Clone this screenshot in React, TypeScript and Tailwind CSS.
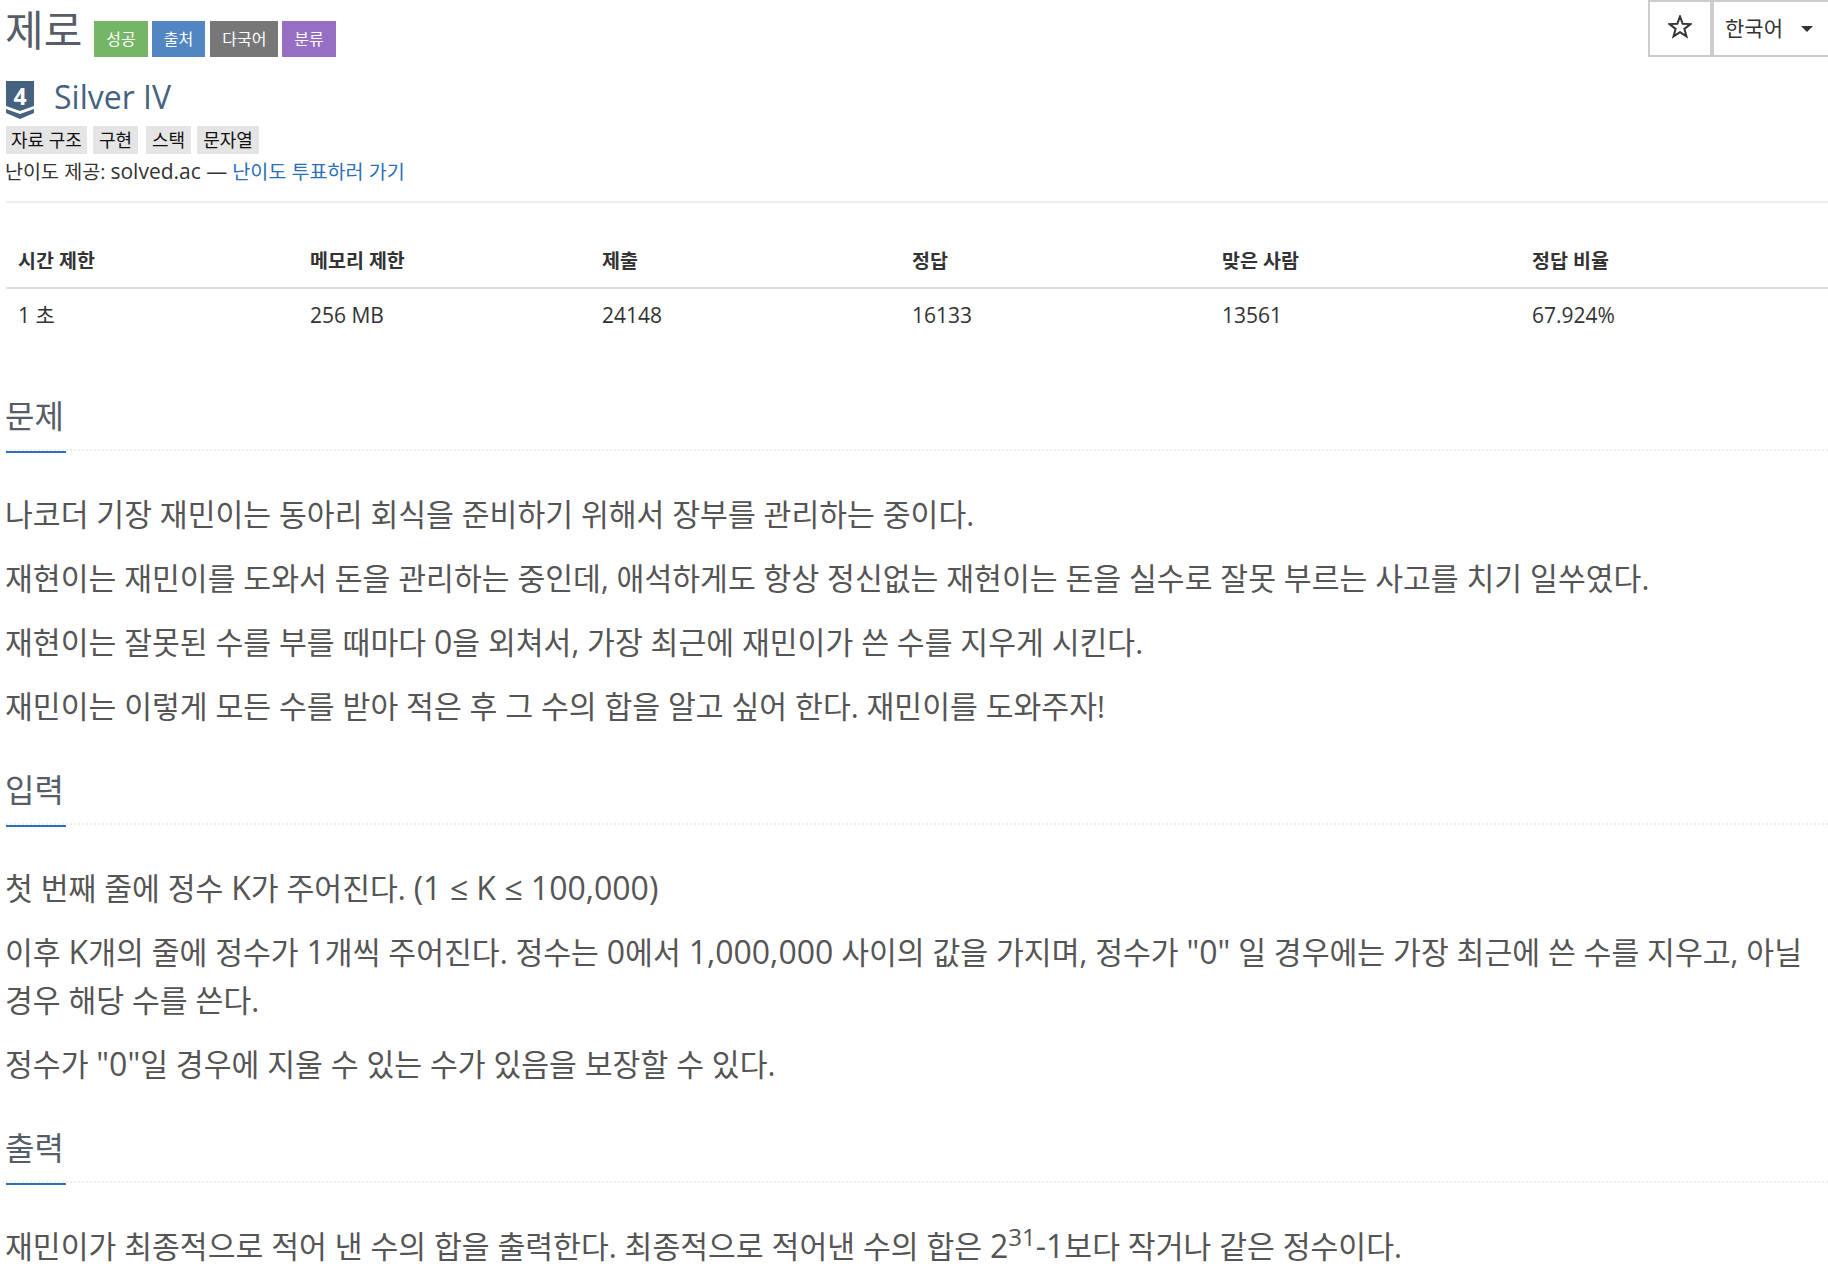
import React from 'react';

const fontStack = '"Open Sans", "Noto Sans CJK KR", sans-serif';

const stats = [
  { label: '시간 제한', value: '1 초', width: 'w-[292px]' },
  { label: '메모리 제한', value: '256 MB', width: 'w-[292px]' },
  { label: '제출', value: '24148', width: 'w-[310px]' },
  { label: '정답', value: '16133', width: 'w-[310px]' },
  { label: '맞은 사람', value: '13561', width: 'w-[310px]' },
  { label: '정답 비율', value: '67.924%', width: 'flex-1' },
];

function Badge({ text, className }: { text: string; className: string }) {
  return (
    <span className={`inline-flex h-9 items-center px-3 text-[16px] text-white ${className}`}>{text}</span>
  );
}

function Tag({ text, className = '' }: { text: string; className?: string }) {
  return <span className={`inline-flex h-7 items-center bg-[#e5e5e5] text-[18px] text-[#111] ${className}`}>{text}</span>;
}

// latin runs sit a little larger than the hangul around them
function L({ children }: { children: React.ReactNode }) {
  return <span className="text-[32px] leading-none">{children}</span>;
}

function Section({ title, children }: { title: string; children: React.ReactNode }) {
  return (
    <section>
      <div className="relative h-[59px] border-b-2 border-dotted border-[#eee]">
        <h2 className="-ml-px text-[32px] leading-[48px] text-[#555d68]">{title}</h2>
        <div className="absolute bottom-[-4px] left-0 h-0.5 w-[60px] bg-[#2b70b8]" />
      </div>
      <div className="mt-[40px] -ml-px flex flex-col gap-[16px] pb-[35px] text-[30.25px] leading-[48px] text-[#555]">{children}</div>
    </section>
  );
}

export default function App() {
  return (
    <div className="h-[1278px] overflow-hidden bg-white pl-[6px]" style={{ fontFamily: fontStack }}>
      <header className="flex items-start justify-between">
        <div className="flex items-center gap-[4px] pt-[21px]">
          <h1 className="mr-[8px] -ml-px -translate-y-[9px] text-[42px] leading-[36px] text-[#555d68]">제로</h1>
          <Badge text="성공" className="bg-[#74b566]" />
          <Badge text="출처" className="-mr-px bg-[#5286c2]" />
          <Badge text="다국어" className="ml-[2px] bg-[#777]" />
          <Badge text="분류" className="bg-[#966fc5]" />
        </div>
        <div className="flex h-[57px] text-[21px] text-[#333]">
          <div className="flex w-[64px] items-center justify-center border-2 border-[#ccc] pb-[3px]">
            <svg width="24" height="24" viewBox="-1 -1 24 24" fill="none" stroke="#333" strokeWidth="2">
              <path d="M11 .5L13.7 7.8L21.5 8.1L15.4 12.9L17.5 20.4L11 16.1L4.5 20.4L6.6 12.9L.5 8.1L8.3 7.8Z" />
            </svg>
          </div>
          <div className="flex w-[116px] items-center gap-[18px] border-y-2 border-l-2 border-[#ccc] pl-[11px]">
            한국어
            <span className="border-x-[6px] border-t-[6px] border-x-transparent border-t-[#333]" />
          </div>
        </div>
      </header>

      <div className="mt-[20px] flex items-start gap-[20px]">
        <svg className="mt-[4px]" width="28" height="38" viewBox="0 0 28 38">
          <path d="M0 0H28V25L14 30L0 25Z" fill="#456280" />
          <path d="M0 28L14 33L28 28V32L14 38L0 32Z" fill="#456280" />
          <text x="14" y="24" textAnchor="middle" fontSize="23" fontWeight="700" fill="#fff">4</text>
        </svg>
        <span className="text-[32px] leading-[40px] text-[#456280]">Silver IV</span>
      </div>

      <div className="mt-[7px] flex gap-[6px]">
        <Tag text="자료 구조" className="px-[5px]" />
        <Tag text="구현" className="px-[6px]" />
        <Tag text="스택" className="ml-[2px] px-[6px]" />
        <Tag text="문자열" className="px-[6px]" />
      </div>
      <p className="mt-[4px] -ml-px text-[19.6px] leading-[28px] text-[#333]">
        난이도 제공: <span className="text-[21px] leading-none">solved.ac —</span>{' '}
        <span className="text-[#2b70b8]">난이도 투표하러 가기</span>
      </p>
      <hr className="mt-[15px] border-t-2 border-[#eee]" />

      <div className="mt-[33px] flex h-[53px] items-center border-b-2 border-[#ddd] pb-[2px] text-[19.5px] font-bold text-[#333]">
        {stats.map((s) => (
          <div key={s.label} className={`${s.width} pl-[12px]`}>{s.label}</div>
        ))}
      </div>
      <div className="flex h-[52px] items-center pt-[2px] text-[21px] text-[#333]">
        {stats.map((s) => (
          <div key={s.label} className={`${s.width} pl-[12px]`}>{s.value}</div>
        ))}
      </div>

      <div className="mt-[51px] flex flex-col">
        <Section title="문제">
          <p>나코더 기장 재민이는 동아리 회식을 준비하기 위해서 장부를 관리하는 중이다.</p>
          <p>재현이는 재민이를 도와서 돈을 관리하는 중인데, 애석하게도 항상 정신없는 재현이는 돈을 실수로 잘못 부르는 사고를 치기 일쑤였다.</p>
          <p>재현이는 잘못된 수를 부를 때마다 <L>0</L>을 외쳐서, 가장 최근에 재민이가 쓴 수를 지우게 시킨다.</p>
          <p>재민이는 이렇게 모든 수를 받아 적은 후 그 수의 합을 알고 싶어 한다. 재민이를 도와주자!</p>
        </Section>
        <Section title="입력">
          <p>첫 번째 줄에 정수 <L>K</L>가 주어진다. <L>(1 ≤ K ≤ 100,000)</L></p>
          <p>이후 <L>K</L>개의 줄에 정수가 <L>1</L>개씩 주어진다. 정수는 <L>0</L>에서 <L>1,000,000</L> 사이의 값을 가지며, 정수가 <L>"0"</L> 일 경우에는 가장 최근에 쓴 수를 지우고, 아닐 경우 해당 수를 쓴다.</p>
          <p>정수가 <L>"0"</L>일 경우에 지울 수 있는 수가 있음을 보장할 수 있다.</p>
        </Section>
        <Section title="출력">
          <p>
            재민이가 최종적으로 적어 낸 수의 합을 출력한다. 최종적으로 적어낸 수의 합은 <L>2</L>
            <sup className="text-[24px]">31</sup><L>-1</L>보다 작거나 같은 정수이다.
          </p>
        </Section>
      </div>
    </div>
  );
}
